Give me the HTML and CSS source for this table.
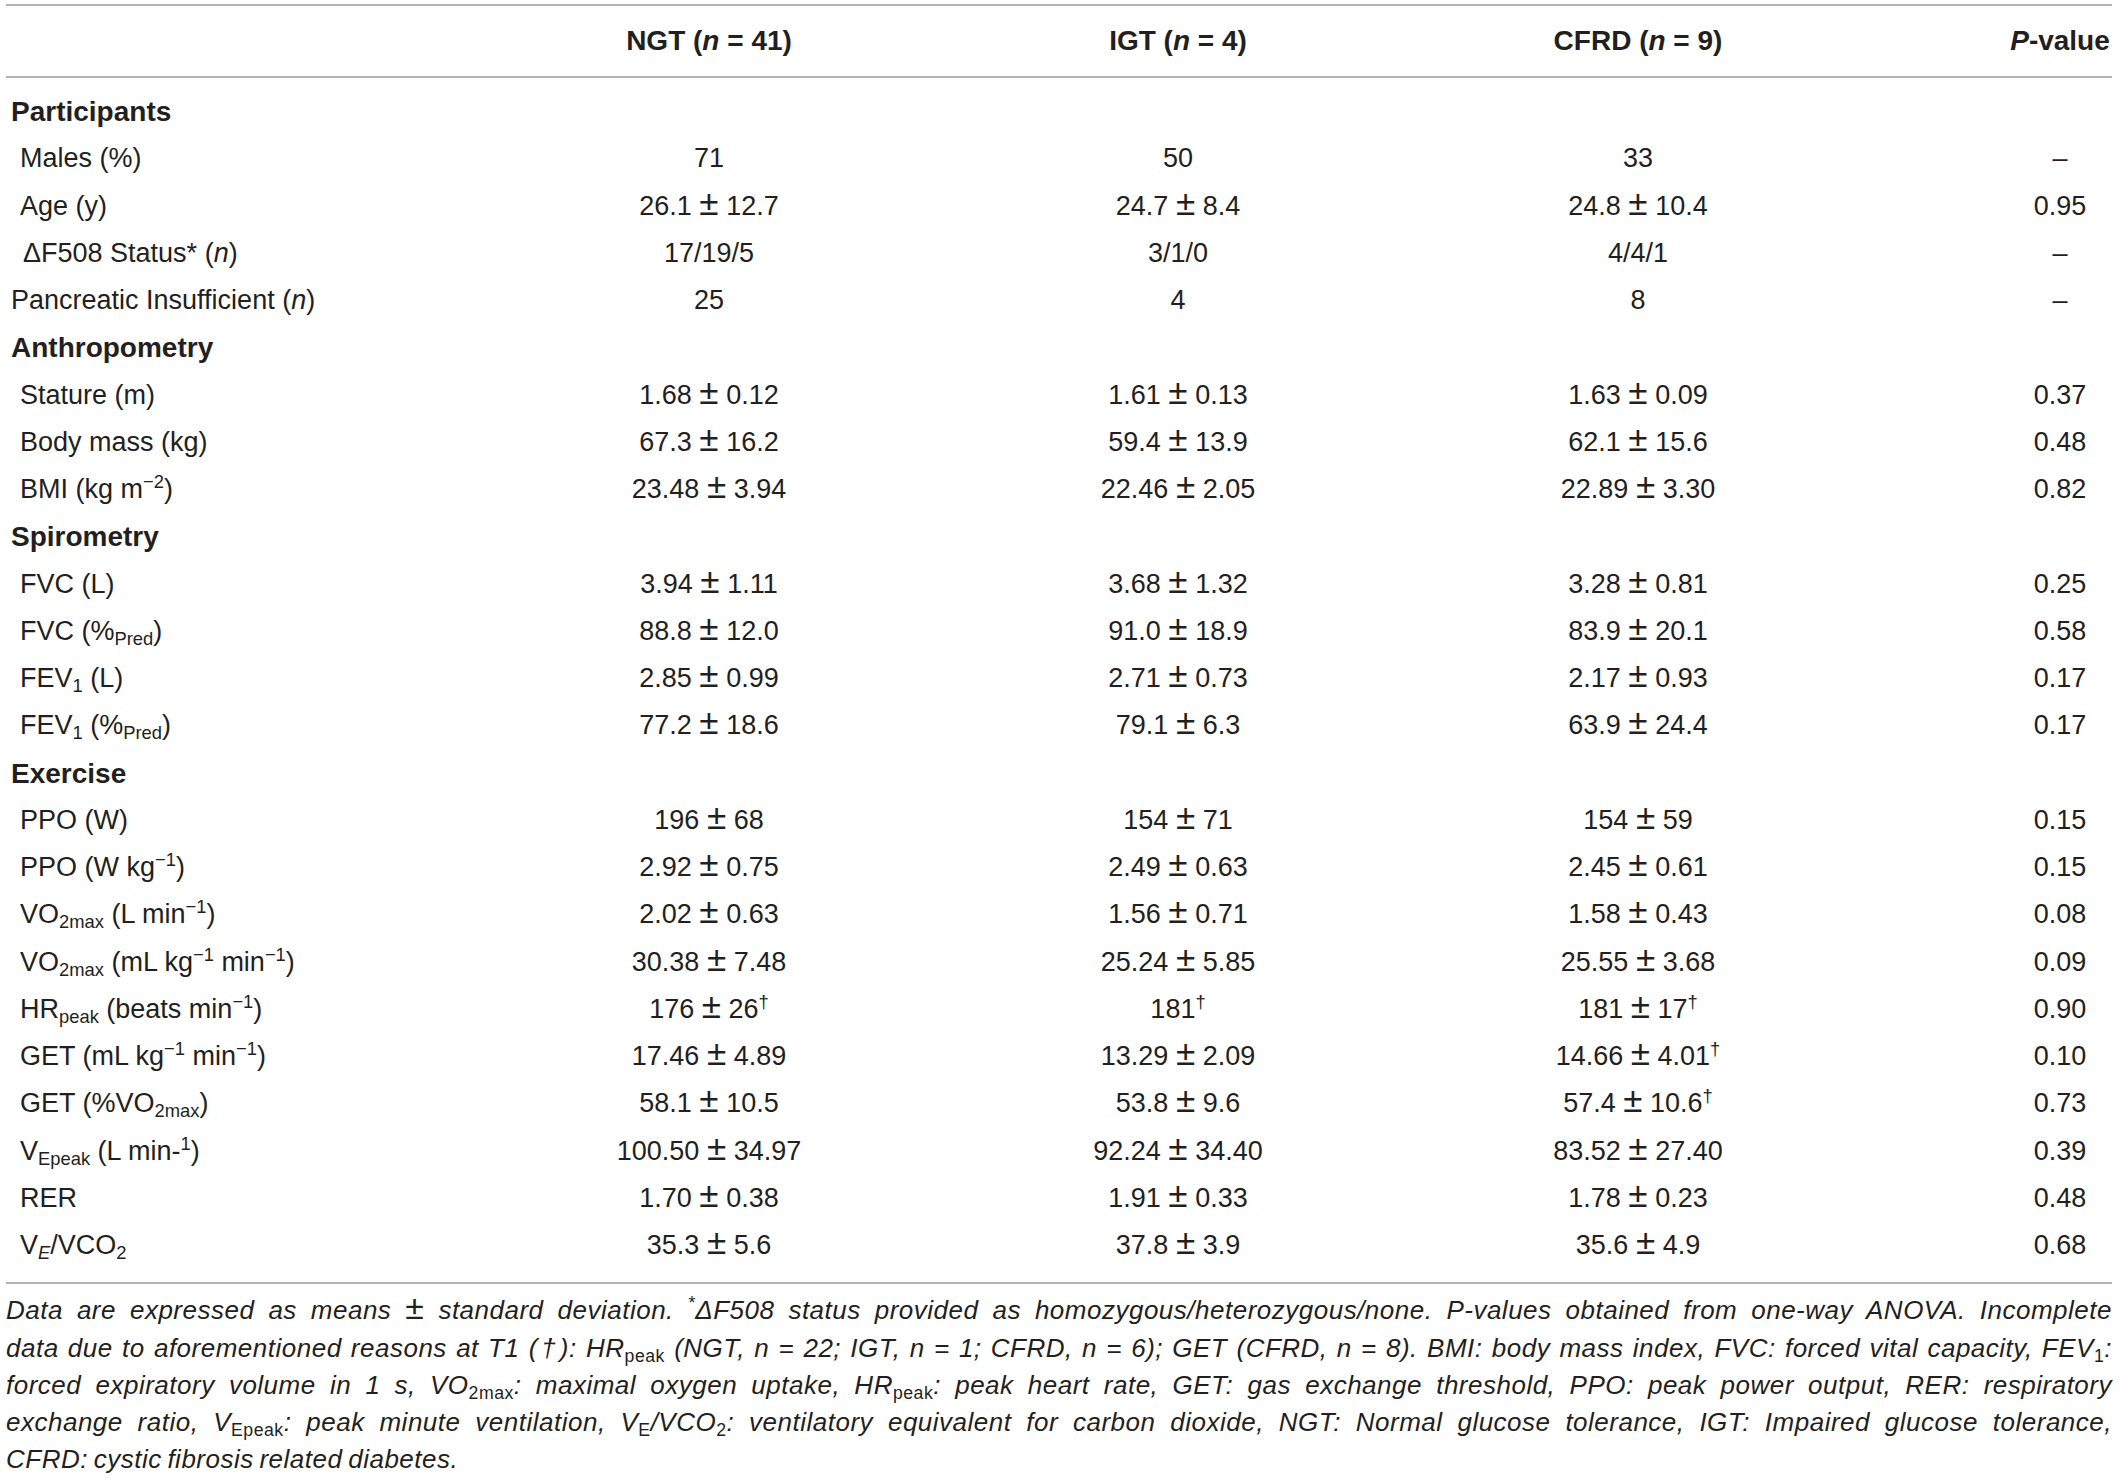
FILE: index.html
```html
<!DOCTYPE html>
<html lang="en">
<head>
    <meta charset="UTF-8">
    <title>Table 1 - Participant characteristics</title>
    <link rel="stylesheet" href="styles.css">
</head>
<body>
    <div class="sheet">
        <table class="data">
            <colgroup>
                <col class="c-label">
                <col class="c-ngt">
                <col class="c-igt">
                <col class="c-cfrd">
                <col class="c-p">
            </colgroup>
            <thead>
                <tr>
                    <th></th>
                    <th>NGT (<i>n</i> = 41)</th>
                    <th>IGT (<i>n</i> = 4)</th>
                    <th>CFRD (<i>n</i> = 9)</th>
                    <th><i>P</i>-value</th>
                </tr>
            </thead>
            <tbody>
                <tr class="section first"><td colspan="5">Participants</td></tr>
                <tr><td>Males (%)</td><td>71</td><td>50</td><td>33</td><td>–</td></tr>
                <tr><td>Age (y)</td><td>26.1 <span class="pm">±</span> 12.7</td><td>24.7 <span class="pm">±</span> 8.4</td><td>24.8 <span class="pm">±</span> 10.4</td><td>0.95</td></tr>
                <tr><td class="deep">ΔF508 Status* (<i>n</i>)</td><td>17/19/5</td><td>3/1/0</td><td>4/4/1</td><td>–</td></tr>
                <tr><td class="flush">Pancreatic Insufficient (<i>n</i>)</td><td>25</td><td>4</td><td>8</td><td>–</td></tr>

                <tr class="section"><td colspan="5">Anthropometry</td></tr>
                <tr><td>Stature (m)</td><td>1.68 <span class="pm">±</span> 0.12</td><td>1.61 <span class="pm">±</span> 0.13</td><td>1.63 <span class="pm">±</span> 0.09</td><td>0.37</td></tr>
                <tr><td>Body mass (kg)</td><td>67.3 <span class="pm">±</span> 16.2</td><td>59.4 <span class="pm">±</span> 13.9</td><td>62.1 <span class="pm">±</span> 15.6</td><td>0.48</td></tr>
                <tr><td>BMI (kg m<sup>−2</sup>)</td><td>23.48 <span class="pm">±</span> 3.94</td><td>22.46 <span class="pm">±</span> 2.05</td><td>22.89 <span class="pm">±</span> 3.30</td><td>0.82</td></tr>

                <tr class="section"><td colspan="5">Spirometry</td></tr>
                <tr><td>FVC (L)</td><td>3.94 <span class="pm">±</span> 1.11</td><td>3.68 <span class="pm">±</span> 1.32</td><td>3.28 <span class="pm">±</span> 0.81</td><td>0.25</td></tr>
                <tr><td>FVC (%<sub>Pred</sub>)</td><td>88.8 <span class="pm">±</span> 12.0</td><td>91.0 <span class="pm">±</span> 18.9</td><td>83.9 <span class="pm">±</span> 20.1</td><td>0.58</td></tr>
                <tr><td>FEV<sub>1</sub> (L)</td><td>2.85 <span class="pm">±</span> 0.99</td><td>2.71 <span class="pm">±</span> 0.73</td><td>2.17 <span class="pm">±</span> 0.93</td><td>0.17</td></tr>
                <tr><td>FEV<sub>1</sub> (%<sub>Pred</sub>)</td><td>77.2 <span class="pm">±</span> 18.6</td><td>79.1 <span class="pm">±</span> 6.3</td><td>63.9 <span class="pm">±</span> 24.4</td><td>0.17</td></tr>

                <tr class="section"><td colspan="5">Exercise</td></tr>
                <tr><td>PPO (W)</td><td>196 <span class="pm">±</span> 68</td><td>154 <span class="pm">±</span> 71</td><td>154 <span class="pm">±</span> 59</td><td>0.15</td></tr>
                <tr><td>PPO (W kg<sup>−1</sup>)</td><td>2.92 <span class="pm">±</span> 0.75</td><td>2.49 <span class="pm">±</span> 0.63</td><td>2.45 <span class="pm">±</span> 0.61</td><td>0.15</td></tr>
                <tr><td>VO<sub>2max</sub> (L min<sup>−1</sup>)</td><td>2.02 <span class="pm">±</span> 0.63</td><td>1.56 <span class="pm">±</span> 0.71</td><td>1.58 <span class="pm">±</span> 0.43</td><td>0.08</td></tr>
                <tr><td>VO<sub>2max</sub> (mL kg<sup>−1</sup> min<sup>−1</sup>)</td><td>30.38 <span class="pm">±</span> 7.48</td><td>25.24 <span class="pm">±</span> 5.85</td><td>25.55 <span class="pm">±</span> 3.68</td><td>0.09</td></tr>
                <tr><td>HR<sub>peak</sub> (beats min<sup>−1</sup>)</td><td>176 <span class="pm">±</span> 26<sup>†</sup></td><td>181<sup>†</sup></td><td>181 <span class="pm">±</span> 17<sup>†</sup></td><td>0.90</td></tr>
                <tr><td>GET (mL kg<sup>−1</sup> min<sup>−1</sup>)</td><td>17.46 <span class="pm">±</span> 4.89</td><td>13.29 <span class="pm">±</span> 2.09</td><td>14.66 <span class="pm">±</span> 4.01<sup>†</sup></td><td>0.10</td></tr>
                <tr><td>GET (%VO<sub>2max</sub>)</td><td>58.1 <span class="pm">±</span> 10.5</td><td>53.8 <span class="pm">±</span> 9.6</td><td>57.4 <span class="pm">±</span> 10.6<sup>†</sup></td><td>0.73</td></tr>
                <tr><td>V<sub>Epeak</sub> (L min-<sup>1</sup>)</td><td>100.50 <span class="pm">±</span> 34.97</td><td>92.24 <span class="pm">±</span> 34.40</td><td>83.52 <span class="pm">±</span> 27.40</td><td>0.39</td></tr>
                <tr><td>RER</td><td>1.70 <span class="pm">±</span> 0.38</td><td>1.91 <span class="pm">±</span> 0.33</td><td>1.78 <span class="pm">±</span> 0.23</td><td>0.48</td></tr>
                <tr class="last"><td>V<sub><i>E</i></sub>/VCO<sub>2</sub></td><td>35.3 <span class="pm">±</span> 5.6</td><td>37.8 <span class="pm">±</span> 3.9</td><td>35.6 <span class="pm">±</span> 4.9</td><td>0.68</td></tr>
            </tbody>
        </table>

        <div class="note">
            <span class="line">Data are expressed as means <span class="pm">±</span> standard deviation. <sup>*</sup>ΔF508 status provided as homozygous/heterozygous/none. P-values obtained from one-way ANOVA. Incomplete</span>
            <span class="line">data due to aforementioned reasons at T1 (†): HR<sub>peak</sub> (NGT, n = 22; IGT, n = 1; CFRD, n = 6); GET (CFRD, n = 8). BMI: body mass index, FVC: forced vital capacity, FEV<sub>1</sub>:</span>
            <span class="line">forced expiratory volume in 1 s, VO<sub>2max</sub>: maximal oxygen uptake, HR<sub>peak</sub>: peak heart rate, GET: gas exchange threshold, PPO: peak power output, RER: respiratory</span>
            <span class="line">exchange ratio, V<sub>Epeak</sub>: peak minute ventilation, V<sub>E</sub>/VCO<sub>2</sub>: ventilatory equivalent for carbon dioxide, NGT: Normal glucose tolerance, IGT: Impaired glucose tolerance,</span>
            <span class="line end">CFRD: cystic fibrosis related diabetes.</span>
        </div>
    </div>
</body>
</html>
```
FILE: styles.css
```css
body {
    margin: 0;
    background-color: #ffffff;
    color: #231f20;
    font-family: "Liberation Sans", Arial, Helvetica, sans-serif;
}
.sheet {
    width: 2106px;
    padding: 4px 0 0 6px;
}
.data {
    width: 2106px;
    table-layout: fixed;
    border-collapse: separate;
    border-spacing: 0;
    font-size: 27px;
}
.c-label { width: 324px; }
.c-ngt { width: 758px; }
.c-igt { width: 180px; }
.c-cfrd { width: 740px; }
.c-p { width: 104px; }

.data th {
    height: 70px;
    padding: 0;
    font-size: 28px;
    font-weight: bold;
    text-align: center;
    vertical-align: middle;
    white-space: nowrap;
    border-top: 2px solid #b3b3b3;
    border-bottom: 2px solid #b3b3b3;
}
.data td {
    padding: 0;
    line-height: 47.25px;
    text-align: center;
    white-space: nowrap;
}
.data td:first-child {
    text-align: left;
    padding-left: 14px;
}
.data td.deep {
    padding-left: 17px;
}
.data td.flush {
    padding-left: 5px;
}
.data tr.section td {
    padding-left: 5px;
    font-size: 28px;
    font-weight: bold;
}
.data tr.first td {
    padding-top: 10px;
}
.data tr.last td {
    padding-bottom: 13px;
    border-bottom: 2px solid #b3b3b3;
}
sub, sup {
    line-height: 0;
    font-size: 0.68em;
}
sup {
    vertical-align: 0.55em;
}
sub {
    vertical-align: -0.28em;
}
.pm {
    font-size: 1.3em;
    line-height: 0;
}

/* footnote under the table */
.note {
    width: 2106px;
    margin-top: 8px;
    font-size: 26px;
    font-style: italic;
    letter-spacing: 0.5px;
    word-spacing: -2px;
    line-height: 37.3px;
}
.note .line {
    display: block;
    text-align: justify;
    text-align-last: justify;
}
.note .line.end {
    text-align-last: left;
}
.note sub {
    font-style: normal;
}
.note .pm {
    font-style: normal;
}
```
